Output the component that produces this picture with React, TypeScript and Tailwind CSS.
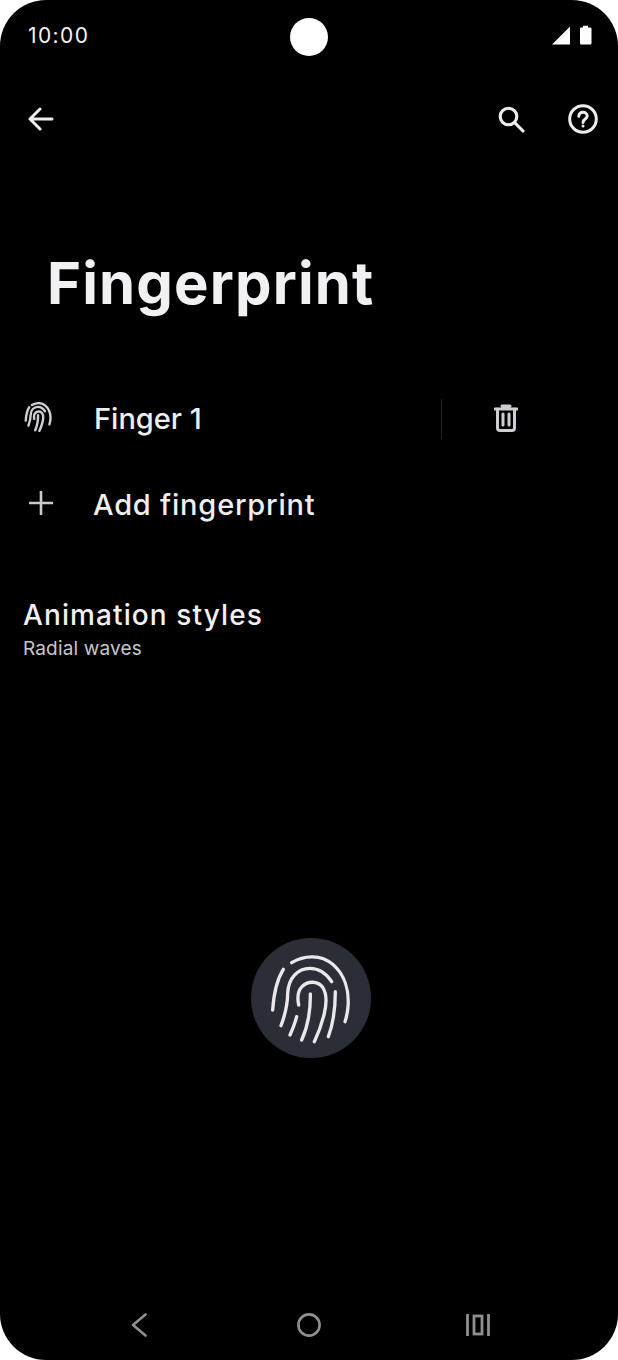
const font = { fontFamily: '"Inter", "Noto Sans", sans-serif' };

function Print({ className, sw = 9, color = "#e9e9eb", box = "0 0 435 435", simple = false }: { className: string; sw?: number; color?: string; box?: string; simple?: boolean }) {
  return (
    <svg viewBox={box} className={className} fill="none" stroke={color} strokeWidth={sw} strokeLinecap="round" strokeLinejoin="round">
      <path d="M157 113C195 90 245 88 280 118C315 148 330 195 326 245C325 260 322 275 317 290" />
      <path d="M132 133C112 165 103 210 100 255" />
      <path d="M125 302C137 270 145 240 145 205C147 160 175 130 212 130C240 130 262 147 277 170" />
      <path d="M178 240C174 220 173 200 188 185C205 167 235 167 250 187C262 205 262 235 255 265C248 295 237 325 225 350" />
      <path d="M213 207C214 260 205 305 187 345" />
      {!simple && <path d="M172 275C167 295 160 312 152 330" />}
      {!simple && <path d="M288 200C288 250 282 295 267 335" />}
    </svg>
  );
}

export default function App() {
  return (
    <div className="bg-white w-[618px] h-[1360px]" style={font}>
      <div className="relative bg-black rounded-[46px] h-full overflow-hidden flex flex-col text-[#ededef]">
        <div className="h-[72px] shrink-0 flex items-start justify-between pt-[22px] pl-[28px] pr-[26px]">
          <span className="text-[21px] leading-[28px] font-normal tracking-[1.4px] text-[#f4f4f4]">10:00</span>
          <svg viewBox="0 0 40 20" className="w-[40px] h-[20px] mt-[3px]" fill="#ffffff">
            <path d="M0 19.5 18 1.5V19.5Z" />
            <path d="M28 3.5C28 2.7 28.6 2.4 29.2 2.4H31V0.8H36V2.4H37.8C38.6 2.4 39.5 2.8 39.5 3.8V18C39.5 19 38.8 19.5 38 19.5H29.5C28.6 19.5 28 19 28 18Z" />
          </svg>
        </div>
        <div className="absolute left-[290px] top-[18px] w-[38px] h-[38px] rounded-full bg-white" />

        <div className="h-[94px] shrink-0 flex items-center justify-between pl-[28px] pr-[20px]">
          <svg viewBox="0 0 26 24" className="w-[26px] h-[24px]" fill="none" stroke="#ededef" strokeWidth="3" strokeLinecap="round" strokeLinejoin="round">
            <path d="M24 12H2.5M12 2 2 12l10 10" />
          </svg>
          <div className="flex items-center gap-[43px]">
            <svg viewBox="0 0 27 27" className="w-[27px] h-[27px]" fill="none" stroke="#ededef" strokeWidth="3.1" strokeLinecap="round">
              <circle cx="10.5" cy="10.5" r="8.3" />
              <path d="M16.7 16.7 25 25" />
            </svg>
            <svg viewBox="0 0 30 30" className="w-[30px] h-[30px]" fill="none" stroke="#ededef" strokeWidth="3" strokeLinecap="round">
              <circle cx="15" cy="15" r="13.3" />
              <path d="M10.8 12.2C10.8 9.8 12.7 8.2 15 8.2S19.2 9.8 19.2 12C19.2 15 15 15 15 18.5" />
              <circle cx="15" cy="22" r="1.5" fill="#ededef" stroke="none" />
            </svg>
          </div>
        </div>

        <h1 className="pl-[47px] mt-[82px] text-[58px] leading-[70px] font-bold tracking-[1.15px] text-[#f1f1f3]">Fingerprint</h1>

        <div className="mt-[76px] flex items-center h-[50px] pl-[24px] pr-[100px]">
          <Print className="w-[28px] h-[30px] -mt-[4px]" sw={22} color="#cfcfd3" box="90 85 245 275" simple />
          <span className="ml-[42px] flex-1 text-[29px] leading-[36px] font-medium text-[#eeeef0]">Finger 1</span>
          <div className="w-px h-[40px] bg-[#222224] mr-[52px]" />
          <svg viewBox="0 0 24 28" className="w-[24px] h-[28px] -mt-[3px]" fill="none" stroke="#cdcdd2" strokeWidth="3" strokeLinecap="round" strokeLinejoin="round">
            <path d="M1 5H23M8 2H16" />
            <path d="M3.5 5V24C3.5 25.5 4.5 26.5 6 26.5H18C19.5 26.5 20.5 25.5 20.5 24V5" />
            <path d="M9 10V21M15 10V21" />
          </svg>
        </div>

        <div className="mt-[36px] flex items-center h-[50px] pl-[29px]">
          <svg viewBox="0 0 24 24" className="w-[24px] h-[24px] -mt-[4px]" fill="none" stroke="#c9c9ce" strokeWidth="2.6">
            <path d="M0 12H24M12 0V24" />
          </svg>
          <span className="ml-[40px] text-[29px] leading-[36px] font-medium tracking-[0.8px] text-[#eeeef0]">Add fingerprint</span>
        </div>

        <div className="mt-[67px] pl-[23px] flex flex-col">
          <span className="text-[28px] leading-[36px] font-medium tracking-[1.1px] text-[#f0f0f2]">Animation styles</span>
          <span className="mt-[3px] text-[19px] leading-[26px] font-normal tracking-[0.15px] text-[#c6c6cb]">Radial waves</span>
        </div>

        <div className="flex-1 flex flex-col items-center justify-end pl-[4px] pb-[302px]">
          <div className="w-[120px] h-[120px] rounded-full bg-[#2b2e36] flex items-center justify-center">
            <Print className="w-[120px] h-[120px]" sw={10} box="35 39 360 360" />
          </div>
        </div>

        <div className="absolute bottom-[23px] left-[131px] flex items-center">
          <svg viewBox="0 0 16 24" className="w-[16px] h-[24px]" fill="none" stroke="#8f8f8f" strokeWidth="2.6" strokeLinecap="round" strokeLinejoin="round">
            <path d="M14.5 1.5 2 12l12.5 10.5" />
          </svg>
          <svg viewBox="0 0 24 24" className="w-[24px] h-[24px] ml-[150px]" fill="none" stroke="#8f8f8f" strokeWidth="2.6">
            <circle cx="12" cy="12" r="10.6" />
          </svg>
          <svg viewBox="0 0 24 22" className="w-[24px] h-[22px] ml-[145px]" fill="none" stroke="#8f8f8f" strokeWidth="2.8">
            <path d="M1.5 0V22M22.5 0V22" />
            <rect x="8" y="2" width="8" height="18" />
          </svg>
        </div>
      </div>
    </div>
  );
}
